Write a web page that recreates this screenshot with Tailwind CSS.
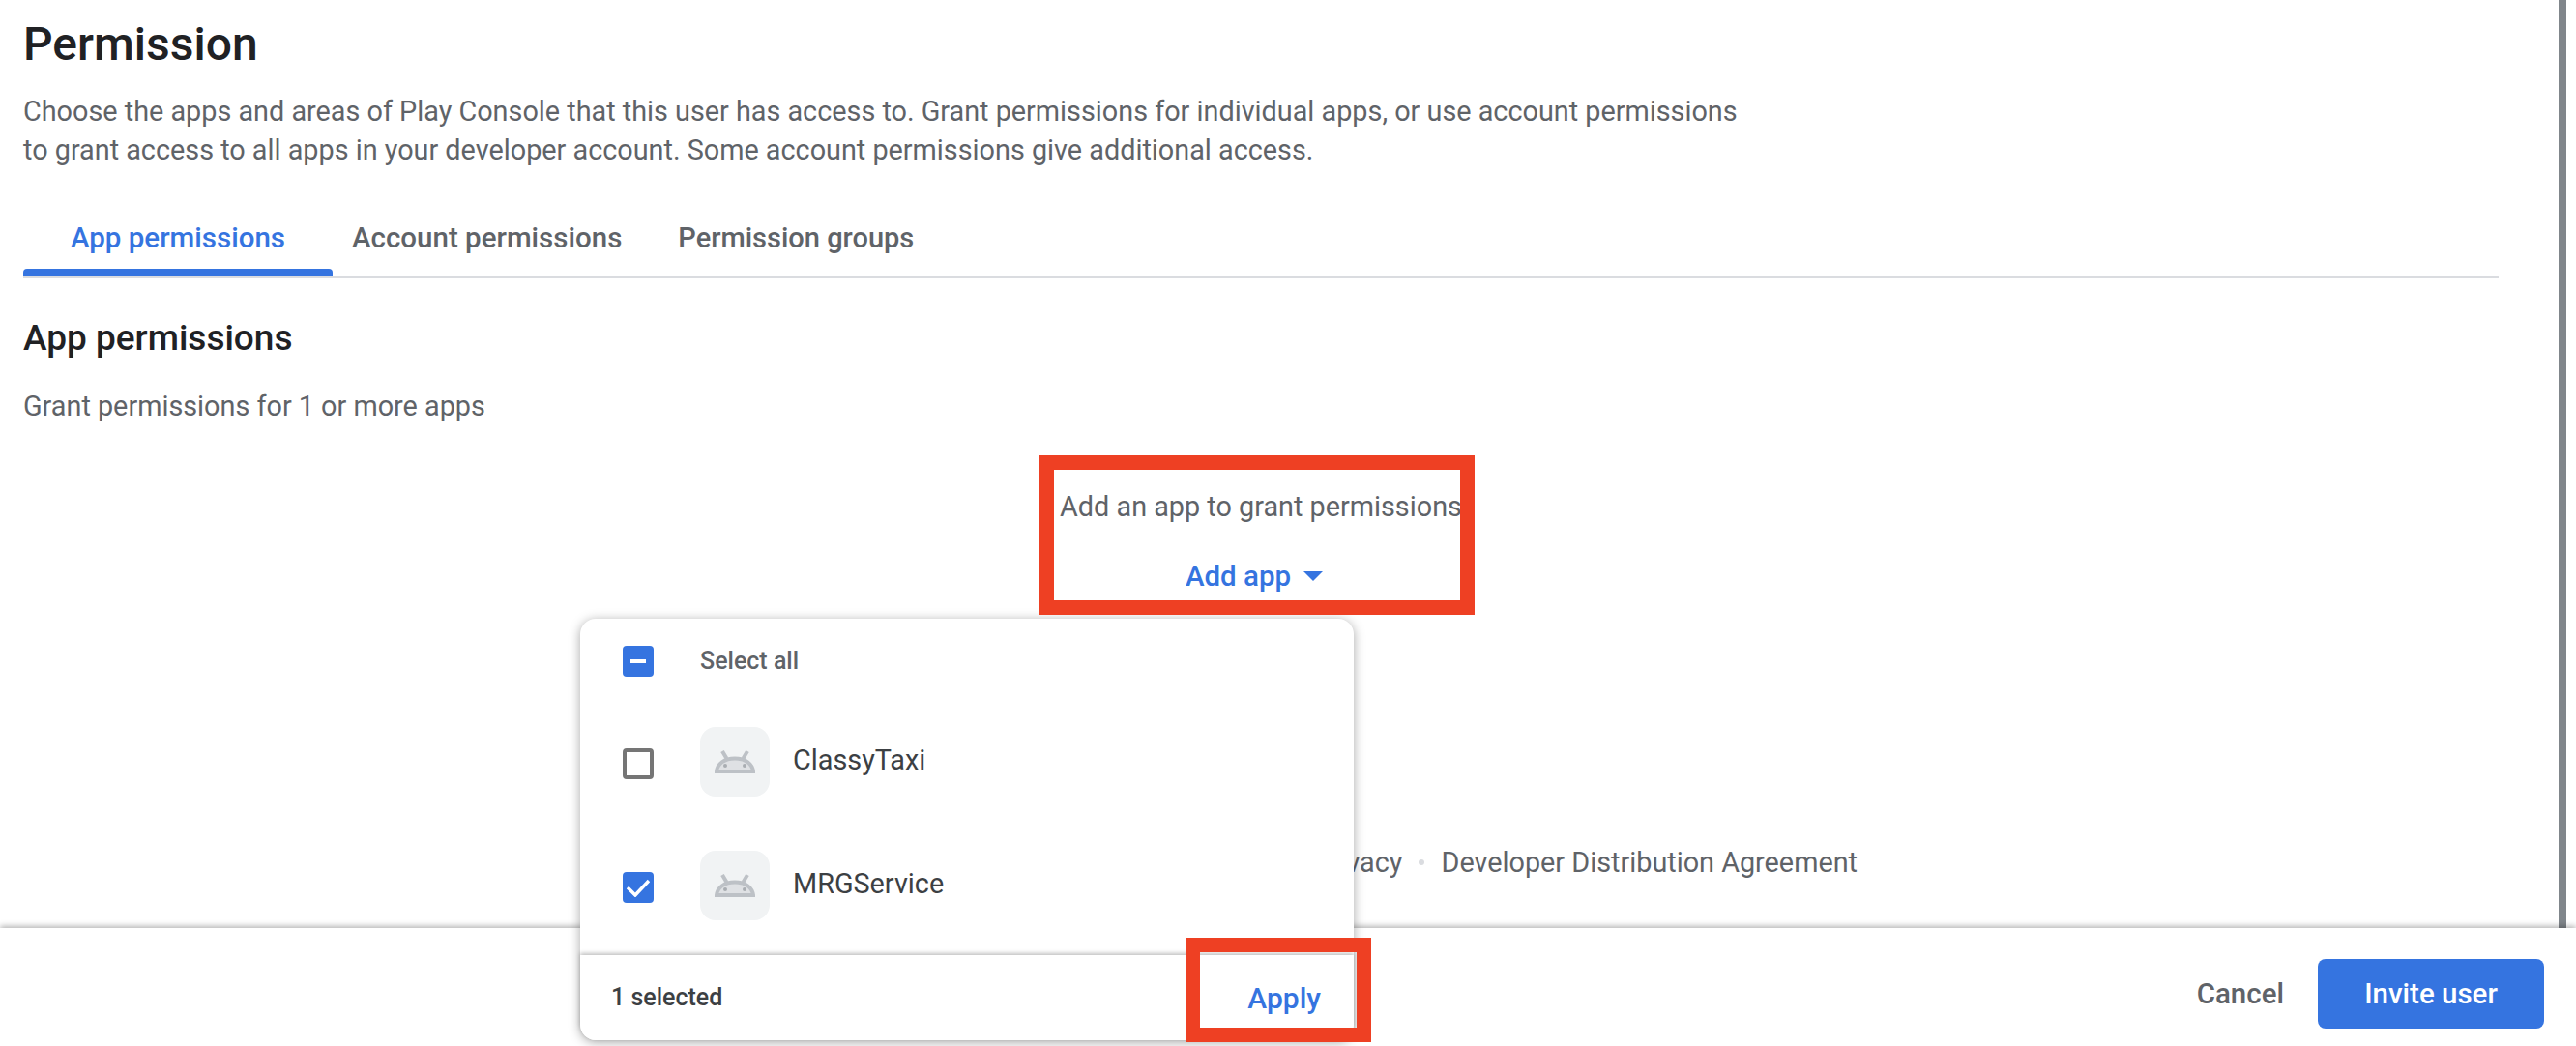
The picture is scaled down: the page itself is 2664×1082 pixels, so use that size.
<html lang="en">

<head>
    <meta charset="UTF-8">
    <title>Permission</title>
    <script src="https://cdn.jsdelivr.net/npm/@tailwindcss/browser@4"></script>
</head>

<body class="bg-white font-[Roboto,sans-serif] text-[#5f6368] overflow-hidden">
    <div class="relative flex flex-col h-[1082px]">
        <!-- page content -->
        <main class="relative h-[960px] overflow-hidden pl-6 pr-20">
            <h1 class="pt-[20px] text-[48px] leading-[52px] font-medium text-[#202124]">Permission</h1>
            <p class="mt-[23px] text-[28.800px] leading-[40px] w-[1790px]">Choose the apps and areas of Play Console that this user has access to. Grant permissions for individual apps, or use account permissions to grant access to all apps in your developer account. Some account permissions give additional access.</p>

            <nav class="mt-[49px] flex h-[64px] border-b-2 border-[#dadce0] text-[29.500px] font-medium">
                <a class="relative w-[320px] text-center leading-[44px] text-[#3574e0]">App permissions
                    <span class="absolute left-0 right-0 bottom-0 h-2 rounded-t bg-[#3574e0]"></span>
                </a>
                <a class="ml-5 leading-[44px]">Account permissions</a>
                <a class="ml-[58px] leading-[44px] text-[29px]">Permission groups</a>
            </nav>

            <h2 class="mt-[40px] text-[37px] leading-[44px] font-medium text-[#202124]">App permissions</h2>
            <p class="mt-[28px] text-[28.800px] leading-[40px]">Grant permissions for 1 or more apps</p>

            <div class="mt-[64px] flex flex-col items-center text-[28.800px]">
                <p class="leading-[40px]">Add an app to grant permissions</p>
                <button class="mt-[32px] mr-[14px] flex items-center gap-[13px] leading-[40px] text-[29.500px] text-[#3574e0] font-medium">
                    Add app
                    <span class="w-0 h-0 border-x-[10px] border-x-transparent border-t-[10px] border-t-[#3574e0]"></span>
                </button>
            </div>

            <footer class="absolute right-[743px] top-[872px] flex items-center gap-[17px] text-[28.800px] leading-[40px]">
                <span>Privacy</span>
                <span class="w-[6px] h-[6px] rounded-full bg-[#dadce0]"></span>
                <span>Developer Distribution Agreement</span>
            </footer>

            <div class="absolute left-[2646px] top-0 bottom-0 w-2 bg-[#80868b]"></div>
        </main>

        <!-- bottom action bar -->
        <div class="h-[122px] bg-white shadow-[0_-2px_6px_rgba(0,0,0,0.3)] z-10 flex items-center justify-end pr-[33px] pt-[14px] text-[29.500px] font-medium">
            <button class="mr-[35px]">Cancel</button>
            <button class="w-[234px] h-[72px] rounded-lg bg-[#3574e0] text-white">Invite user</button>
        </div>

        <!-- app picker menu -->
        <div class="absolute z-20 left-[600px] top-[640px] w-[800px] h-[436px] rounded-2xl bg-white shadow-[0_2px_12px_rgba(0,0,0,0.35)] flex flex-col">
            <div class="flex items-center h-[64px] mt-[12px] pl-[44px]">
                <span class="flex items-center justify-center w-8 h-8 rounded bg-[#3574e0]">
                    <span class="w-4 h-1 bg-white"></span>
                </span>
                <span class="ml-12 text-[25px] font-medium">Select all</span>
            </div>
            <div class="flex items-center h-[72px] mt-[36px] pl-[44px]">
                <span class="mt-1 w-8 h-8 rounded border-4 border-[#757575]"></span>
                <span class="ml-12 flex items-center justify-center w-[72px] h-[72px] rounded-2xl bg-[#f1f3f4]">
                    <svg width="42" height="24" viewBox="0 0 42 24" fill="#dfe1e4" stroke="#bdc1c6" stroke-width="4"><path d="M2 22C3 14 10 8.500 21 8.500S39 14 40 22z"/><path d="M8 1l4.500 7.500M34 1l-4.500 7.500"/><circle cx="11" cy="16" r="2" fill="#a9adb2" stroke="none"/><circle cx="31" cy="16" r="2" fill="#a9adb2" stroke="none"/></svg>
                </span>
                <span class="ml-6 -mt-[3px] text-[28.800px] text-[#3c4043]">ClassyTaxi</span>
            </div>
            <div class="flex items-center h-[72px] mt-[56px] pl-[44px]">
                <span class="mt-1 flex items-center justify-center w-8 h-8 rounded bg-[#3574e0]">
                    <svg width="24" height="20" viewBox="0 0 24 20" fill="none" stroke="white" stroke-width="3.500"><path d="M1 10l8 8L23 3"/></svg>
                </span>
                <span class="ml-12 flex items-center justify-center w-[72px] h-[72px] rounded-2xl bg-[#f1f3f4]">
                    <svg width="42" height="24" viewBox="0 0 42 24" fill="#dfe1e4" stroke="#bdc1c6" stroke-width="4"><path d="M2 22C3 14 10 8.500 21 8.500S39 14 40 22z"/><path d="M8 1l4.500 7.500M34 1l-4.500 7.500"/><circle cx="11" cy="16" r="2" fill="#a9adb2" stroke="none"/><circle cx="31" cy="16" r="2" fill="#a9adb2" stroke="none"/></svg>
                </span>
                <span class="ml-6 -mt-[3px] text-[28.800px] text-[#3c4043]">MRGService</span>
            </div>
            <div class="mt-auto h-[88px] rounded-b-2xl bg-white shadow-[0_-2px_4px_rgba(0,0,0,0.25)] flex items-center justify-between pl-[32px] pr-[34px]">
                <span class="text-[25px] font-medium text-[#3c4043]">1 selected</span>
                <button class="text-[30px] font-medium text-[#3574e0]">Apply</button>
            </div>
        </div>

        <!-- red annotation boxes -->
        <div class="absolute z-30 left-[1075px] top-[471px] w-[450px] h-[165px] border-[15px] border-[#ee4023]"></div>
        <div class="absolute z-30 left-[1226px] top-[970px] w-[192px] h-[108px] border-[15px] border-[#ee4023]"></div>
    </div>
</body>

</html>
